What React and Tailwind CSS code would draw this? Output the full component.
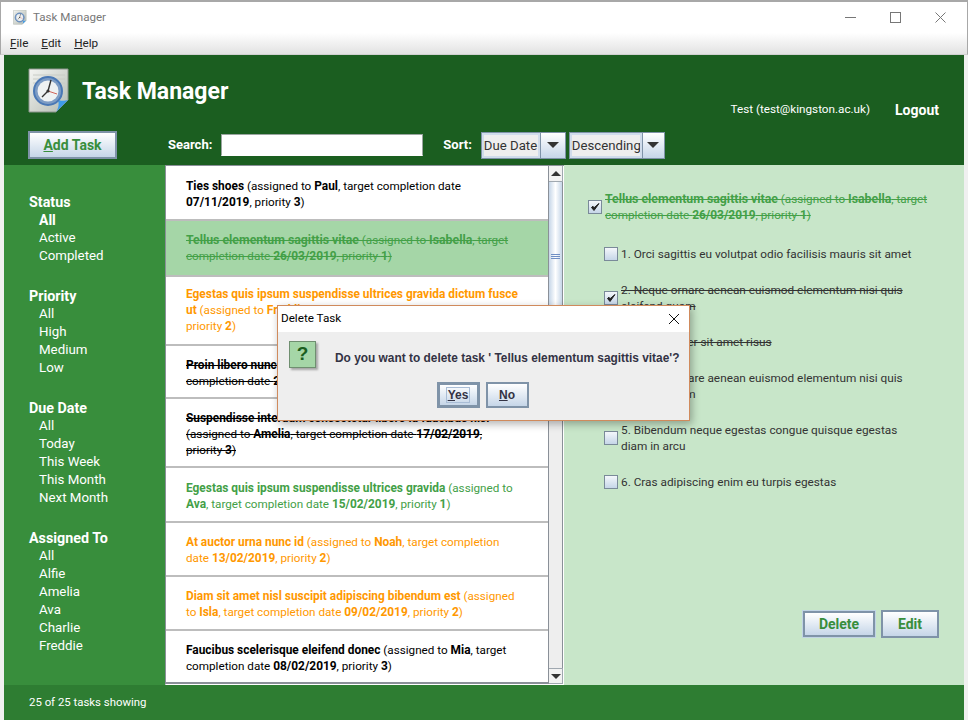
const FONT = "font-['Roboto','Noto_Sans',sans-serif]"

function AppIcon({ w = 42, h = 46 }) {
  return (
    <svg width={w} height={h} viewBox="0 0 42 46">
      <defs>
        <linearGradient id="page" x1="0" y1="0" x2="1" y2="1">
          <stop offset="0" stopColor="#f4f5f2" />
          <stop offset="1" stopColor="#b4bbb3" />
        </linearGradient>
      </defs>
      <path d="M1 1h39v31L28 44H1z" fill="url(#page)" stroke="#8d958d" strokeWidth="1" />
      <path d="M5 7h32M5 11h32M5 15h32M5 19h32M5 23h32M5 27h32" stroke="#c8ccc6" strokeWidth="1" />
      <path d="M28 44l12-12c-3 1-8 1-10 0 1 3 1 8-2 12z" fill="#3f9be8" />
      <circle cx="20" cy="23" r="14" fill="#7d9cc4" stroke="#4a78b5" strokeWidth="2" />
      <circle cx="20" cy="23" r="10.5" fill="#eef1f2" />
      <path d="M20 23l3-11M20 23l-6 6" stroke="#333" strokeWidth="1.4" />
      <path d="M20 23l9 3" stroke="#d0645a" strokeWidth="1" />
      <circle cx="20" cy="23" r="1.6" fill="#333" />
    </svg>
  )
}

function Check({ checked }) {
  return (
    <span className="w-[14px] h-[14px] shrink-0 border border-[#7a8a99] bg-gradient-to-b from-[#f4f7fb] to-[#c6d6e8] flex items-center justify-center">
      {checked && (
        <svg width="10" height="10" viewBox="0 0 10 10">
          <path d="M1.5 5.5L4 8.5 9 1.5 4.2 5.6 2.8 4.2z" fill="#222" stroke="#222" strokeWidth="1" />
        </svg>
      )}
    </span>
  )
}

function Arrow() {
  return <span className="w-0 h-0 border-x-[6px] border-x-transparent border-t-[6px] border-t-[#333]" />
}

function Select({ label, textW, arrowW }) {
  return (
    <div className="flex h-[27px] border border-[#7f93a8] bg-[#eeeeee]">
      <div className={`${textW} border-2 border-[#d0dceb] text-[13.2px] leading-[22px] text-[#333] whitespace-nowrap overflow-hidden`}>{label}</div>
      <div className={`${arrowW} border-l border-[#7f93a8] bg-gradient-to-b from-white to-[#c6d6e8] flex items-center justify-center`}>
        <Arrow />
      </div>
    </div>
  )
}

const FILTERS = [
  { title: 'Status', items: ['All', 'Active', 'Completed'] },
  { title: 'Priority', items: ['All', 'High', 'Medium', 'Low'] },
  { title: 'Due Date', items: ['All', 'Today', 'This Week', 'This Month', 'Next Month'] },
  { title: 'Assigned To', items: ['All', 'Alfie', 'Amelia', 'Ava', 'Charlie', 'Freddie'] },
]

// second value of a segment: 0 normal, 1 bold, 2 bold and a bit wider
const TASKS = [
  { h: 'h-[55px] pt-[12px]', color: 'text-black', lines: [
    [['Ties shoes', 1], [' (assigned to ', 0], ['Paul', 1], [', target completion date', 0]],
    [['07/11/2019', 1], [', priority ', 0], ['3', 1], [')', 0]],
  ] },
  { h: 'h-[56px] pt-[11px]', color: 'text-[#43a047]', bg: 'bg-[#a5d6a7]', strike: true, lines: [
    [['Tellus elementum sagittis vitae', 2], [' (assigned to ', 0], ['Isabella', 2], [', target', 0]],
    [['completion date ', 0], ['26/03/2019', 1], [', priority ', 0], ['1', 1], [')', 0]],
  ] },
  { h: 'h-[69px] pt-[9px]', color: 'text-[#ff9800]', lines: [
    [['Egestas quis ipsum suspendisse ultrices gravida dictum fusce', 1]],
    [['ut', 1], [' (assigned to ', 0], ['Freddie', 1], [', target completion date ', 0], ['12/03/2019', 1], [',', 0]],
    [['priority ', 0], ['2', 1], [')', 0]],
  ] },
  { h: 'h-[53px] pt-[11px]', color: 'text-black', strike: true, lines: [
    [['Proin libero nunc consequat interdum', 1], [' (assigned to ', 0], ['Ava', 1], [', target', 0]],
    [['completion date ', 0], ['20/02/2019', 1], [', priority ', 0], ['3', 1], [')', 0]],
  ] },
  { h: 'h-[69px] pt-[11px]', color: 'text-black', strike: true, lines: [
    [['Suspendisse interdum consectetur libero id faucibus nisl', 1]],
    [['(assigned to ', 0], ['Amelia', 1], [', target completion date ', 0], ['17/02/2019', 1], [',', 0]],
    [['priority ', 0], ['3', 1], [')', 0]],
  ] },
  { h: 'h-[55px] pt-[12px]', color: 'text-[#43a047]', lines: [
    [['Egestas quis ipsum suspendisse ultrices gravida', 1], [' (assigned to', 0]],
    [['Ava', 1], [', target completion date ', 0], ['15/02/2019', 1], [', priority ', 0], ['1', 1], [')', 0]],
  ] },
  { h: 'h-[54px] pt-[11px]', color: 'text-[#ff9800]', lines: [
    [['At auctor urna nunc id', 1], [' (assigned to ', 0], ['Noah', 1], [', target completion', 0]],
    [['date ', 0], ['13/02/2019', 1], [', priority ', 0], ['2', 1], [')', 0]],
  ] },
  { h: 'h-[54px] pt-[11px]', color: 'text-[#ff9800]', lines: [
    [['Diam sit amet nisl suscipit adipiscing bibendum est', 1], [' (assigned', 0]],
    [['to ', 0], ['Isla', 1], [', target completion date ', 0], ['09/02/2019', 1], [', priority ', 0], ['2', 1], [')', 0]],
  ] },
  { h: 'h-[53px] pt-[11px]', color: 'text-black', lines: [
    [['Faucibus scelerisque eleifend donec', 1], [' (assigned to ', 0], ['Mia', 1], [', target', 0]],
    [['completion date ', 0], ['08/02/2019', 1], [', priority ', 0], ['3', 1], [')', 0]],
  ] },
]

const SUBTASKS = [
  { lines: ['1. Orci sagittis eu volutpat odio facilisis mauris sit amet'] },
  { checked: true, strike: true, lines: ['2. Neque ornare aenean euismod elementum nisi quis', 'eleifend quam'] },
  { checked: true, strike: true, lines: ['3. Ullamcorper sit amet risus'] },
  { lines: ['4. Neque ornare aenean euismod elementum nisi quis', 'eleifend quam'] },
  { lines: ['5. Bibendum neque egestas congue quisque egestas', 'diam in arcu'] },
  { lines: ['6. Cras adipiscing enim eu turpis egestas'] },
]

function Btn({ children, className = '' }) {
  return (
    <button className={`flex items-center justify-center border-2 border-[#7f93a8] bg-gradient-to-b from-white to-[#c6d6e8] font-bold text-[14px] text-[#388e3c] ${className}`}>
      {children}
    </button>
  )
}

function TaskRow({ task }) {
  return (
    <div className={`${task.h} ${task.bg || 'bg-white'} ${task.color} border-b-2 border-[#bdbdbd] last:border-b-[#8a9098] pl-[20px] text-[11.7px] leading-[16px] whitespace-nowrap shrink-0 ${task.strike ? 'line-through' : ''}`}>
      {task.lines.map((line, i) => (
        <div key={i}>
          {line.map(([text, bold], j) => (
            <span key={j} className={bold === 2 ? 'font-bold text-[12.3px]' : bold ? 'font-bold text-[11.9px]' : ''}>{text}</span>
          ))}
        </div>
      ))}
    </div>
  )
}

function Scrollbar() {
  return (
    <div className="w-[16px] shrink-0 flex flex-col bg-[#eeeeee] border-l border-l-[#8a9098] border-r border-r-white">
      <div className="h-[16px] bg-[#f2f2f2] border-b border-r border-[#a0a8b0] flex items-center justify-center">
        <span className="w-0 h-0 border-x-[5px] border-x-transparent border-b-[5px] border-b-[#333]" />
      </div>
      <div className="h-[150px] bg-gradient-to-r from-[#c6d6e8] via-white to-[#c6d6e8] border-b border-r border-[#8a9098] flex flex-col items-center justify-center gap-[1px]">
        <span className="w-[9px] h-[1px] bg-[#6f8fc4]" />
        <span className="w-[9px] h-[1px] bg-[#6f8fc4]" />
        <span className="w-[9px] h-[1px] bg-[#6f8fc4]" />
      </div>
      <div className="flex-1 border-r border-[#8a9098]" />
      <div className="h-[16px] bg-[#f2f2f2] border-y border-r border-[#a0a8b0] flex items-center justify-center">
        <span className="w-0 h-0 border-x-[5px] border-x-transparent border-t-[5px] border-t-[#333]" />
      </div>
    </div>
  )
}

function DeleteDialog() {
  return (
    <div className="absolute left-[277px] top-[303px] w-[413px] h-[116px] border border-[#d08a5c] bg-[#eeeeee] shadow-[2px_3px_8px_rgba(0,0,0,0.3)] flex flex-col">
      <div className="h-[26px] bg-white flex items-center justify-between pl-[3px] pr-[9px] text-[11.7px] text-black">
        <span>Delete Task</span>
        <svg width="12" height="12" viewBox="0 0 12 12"><path d="M1 1l10 10M11 1L1 11" stroke="#111" strokeWidth="1" /></svg>
      </div>
      <div className="flex items-start pl-[11px] pt-[9px] h-[50px]">
        <div className="w-[27px] h-[27px] bg-[#a5d6a7] border border-[#6f8f70] shadow-[2px_2px_2px_rgba(0,0,0,0.3)] flex items-center justify-center font-['Liberation_Sans',sans-serif] font-bold text-[19px] text-[#1b5e20]">?</div>
        <div className="ml-[19px] mt-[9px] leading-[16px] font-['Liberation_Sans',sans-serif] font-bold text-[11.9px] text-[#333344] whitespace-nowrap">Do you want to delete task ' Tellus elementum sagittis vitae'?</div>
      </div>
      <div className="flex justify-center gap-[6px] pr-[2px] font-['Liberation_Sans',sans-serif]">
        <button className="w-[43px] h-[26px] border-[3px] border-[#7f93a8] bg-gradient-to-b from-white to-[#c6d6e8] font-bold text-[12px] text-[#333344]"><span className="border border-[#a9bdd6] px-[1px]"><u>Y</u>es</span></button>
        <button className="w-[43px] h-[26px] border-2 border-[#7f93a8] bg-gradient-to-b from-white to-[#c6d6e8] font-bold text-[12px] text-[#333344]"><u>N</u>o</button>
      </div>
    </div>
  )
}

export default function App() {
  return (
    <div className={`${FONT} relative w-[968px] h-[720px] overflow-hidden flex flex-col bg-[#f0f0f0] border-t-2 border-[#a8a8a8]`}>
      {/* Title bar */}
      <div className="h-[31px] shrink-0 bg-white flex items-center pl-[12px] border-x border-[#a8a8a8]">
        <AppIcon w={14} h={15} />
        <span className="ml-[6px] text-[11.6px] text-[#777]">Task Manager</span>
        <div className="ml-auto flex items-center pr-[21px] gap-[34px]">
          <svg width="11" height="11" viewBox="0 0 11 11"><path d="M0 5.5h11" stroke="#777" /></svg>
          <svg width="11" height="11" viewBox="0 0 11 11"><rect x=".5" y=".5" width="10" height="10" fill="none" stroke="#777" /></svg>
          <svg width="11" height="11" viewBox="0 0 11 11"><path d="M.5.5l10 10M10.5.5l-10 10" stroke="#777" /></svg>
        </div>
      </div>

      {/* Menu */}
      <div className="h-[22px] shrink-0 bg-gradient-to-b from-white to-[#e2e2e2] border-b border-[#d0d0d0] flex items-center gap-[13px] pl-[9px] text-[11.7px] text-[#222] border-x border-x-[#a8a8a8]">
        <span><u>F</u>ile</span>
        <span><u>E</u>dit</span>
        <span><u>H</u>elp</span>
      </div>

      <div className="flex-1 flex flex-col pl-[4px] pr-[4px] min-h-0">
        {/* Header */}
        <div className="h-[110px] shrink-0 bg-[#1b5e20] flex flex-col pl-[24px] pr-[25px] text-white">
          <div className="h-[76px] flex">
            <div className="pt-[13px]"><AppIcon /></div>
            <div className="ml-[12px] pt-[22px] text-[23px] leading-[30px] font-bold">Task Manager</div>
            <div className="ml-auto pt-[45px] flex items-center h-[65px]">
              <span className="text-[11.7px]">Test (test@kingston.ac.uk)</span>
              <span className="ml-[25px] text-[14px] font-bold">Logout</span>
            </div>
          </div>
          <div className="flex items-center">
            <Btn className="w-[89px] h-[28px]"><span><u>A</u>dd Task</span></Btn>
            <span className="ml-[51px] text-[13px] font-bold">Search:</span>
            <div className="ml-[9px] w-[202px] h-[22px] bg-white border border-[#9aa5a0] border-b-white" />
            <span className="ml-[20px] text-[13px] font-bold">Sort:</span>
            <div className="ml-[9px] flex gap-[3px]">
              <Select label="Due Date" textW="w-[58px]" arrowW="w-[25px]" />
              <Select label="Descending" textW="w-[72px]" arrowW="w-[22px]" />
            </div>
          </div>
        </div>

        <div className="flex-1 flex min-h-0">
          {/* Filters */}
          <aside className="w-[161px] shrink-0 bg-[#388e3c] pl-[25px] pt-[28px] flex flex-col gap-[22px] text-white">
            {FILTERS.map(group => (
              <div key={group.title} className="text-[13.3px] leading-[18px]">
                <div className="font-bold text-[14.3px]">{group.title}</div>
                {group.items.map((item, i) => (
                  <div key={item} className={`pl-[10px] ${group.title === 'Status' && i === 0 ? 'font-bold text-[14px]' : ''}`}>{item}</div>
                ))}
              </div>
            ))}
          </aside>

          {/* Task list */}
          <div className="w-[399px] shrink-0 flex border border-[#8a9098] border-r-0 border-b-white bg-white">
            <div className="flex-1 min-w-0 flex flex-col overflow-hidden">
              {TASKS.map((task, i) => <TaskRow key={i} task={task} />)}
            </div>
            <Scrollbar />
          </div>

          {/* Details */}
          <div className="flex-1 min-w-0 bg-[#c8e6c9] flex flex-col pl-[24px] pr-[25px]">
            <div className="pt-[26px] flex items-center gap-[3px] text-[11.7px] leading-[16px] text-[#43a047] line-through whitespace-nowrap">
              <Check checked />
              <div>
                <div><b className="text-[12.3px]">Tellus elementum sagittis vitae</b> (assigned to <b className="text-[12.3px]">Isabella</b>, target</div>
                <div>completion date <b className="text-[11.9px]">26/03/2019</b>, priority <b className="text-[11.9px]">1</b>)</div>
              </div>
            </div>
            <div className="pl-[16px] pt-[23px] flex flex-col gap-[20px]">
              {SUBTASKS.map((sub, i) => (
                <div key={i} className={`flex items-center gap-[3px] text-[11.8px] leading-[16px] text-[#333] whitespace-nowrap ${sub.strike ? 'line-through' : ''}`}>
                  <Check checked={sub.checked} />
                  <div>{sub.lines.map(l => <div key={l}>{l}</div>)}</div>
                </div>
              ))}
            </div>
            <div className="mt-auto pb-[47px] flex justify-end items-center gap-[6px]">
              <Btn className="w-[72px] h-[26px] shadow-[0_0_0_1px_#c0d4e4]">Delete</Btn>
              <Btn className="w-[58px] h-[28px]">Edit</Btn>
            </div>
          </div>
        </div>

        {/* Status */}
        <div className="h-[35px] shrink-0 bg-[#2e7d32] text-white text-[11.4px] flex items-center pl-[25px]">25 of 25 tasks showing</div>
      </div>

      <DeleteDialog />
    </div>
  )
}
